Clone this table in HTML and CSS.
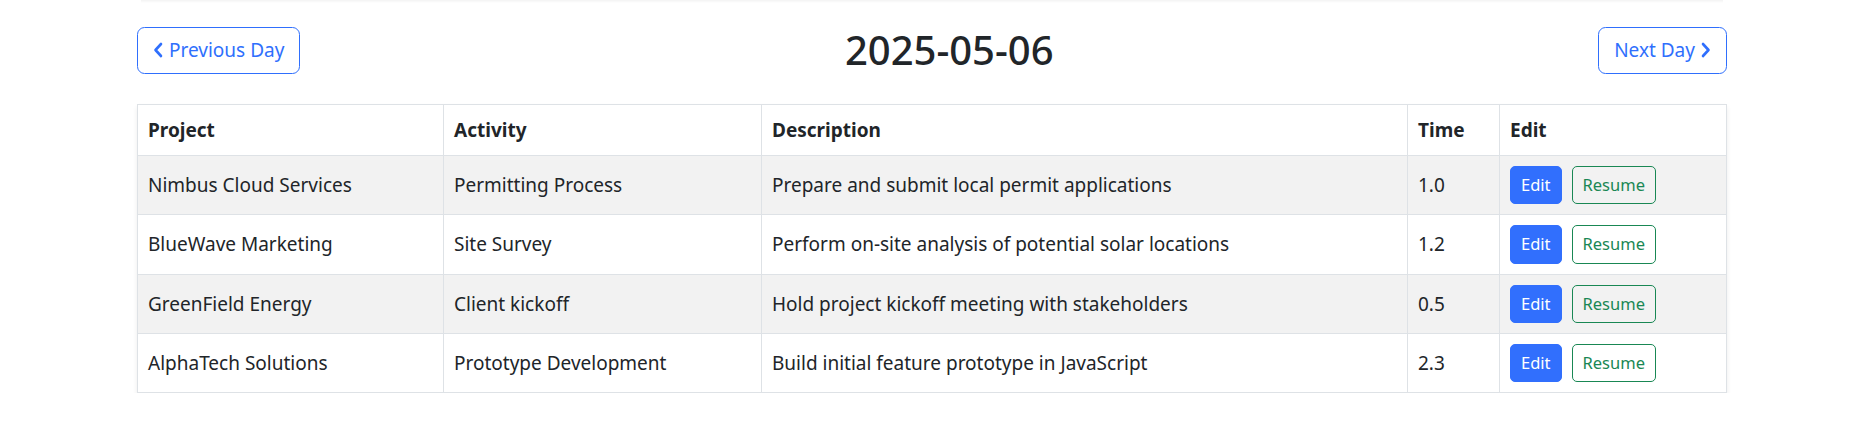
FILE: index.html
```html
<!DOCTYPE html>
<html lang="en">

<head>
    <meta charset="UTF-8">
    <meta name="viewport" content="width=device-width, initial-scale=1.0">
    <title>Daily log</title>
    <link rel="stylesheet" href="styles.css">
</head>

<body>
    <div class="container">
        <div class="card-edge"></div>

        <header class="day-nav">
            <button class="btn btn-outline">
                <svg class="chev" viewBox="0 0 10 16"><path d="M8 2 2.5 8 8 14" /></svg>
                Previous Day
            </button>
            <h2>2025-05-06</h2>
            <button class="btn btn-outline">
                Next Day
                <svg class="chev" viewBox="0 0 10 16"><path d="M2 2 7.5 8 2 14" /></svg>
            </button>
        </header>

        <table class="entries">
            <colgroup>
                <col class="c-project">
                <col class="c-activity">
                <col class="c-desc">
                <col class="c-time">
                <col class="c-edit">
            </colgroup>
            <thead>
                <tr>
                    <th>Project</th>
                    <th>Activity</th>
                    <th>Description</th>
                    <th>Time</th>
                    <th>Edit</th>
                </tr>
            </thead>
            <tbody>
                <tr>
                    <td>Nimbus Cloud Services</td>
                    <td>Permitting Process</td>
                    <td>Prepare and submit local permit applications</td>
                    <td>1.0</td>
                    <td><div class="actions"><button class="btn-sm edit">Edit</button><button class="btn-sm resume">Resume</button></div></td>
                </tr>
                <tr>
                    <td>BlueWave Marketing</td>
                    <td>Site Survey</td>
                    <td>Perform on-site analysis of potential solar locations</td>
                    <td>1.2</td>
                    <td><div class="actions"><button class="btn-sm edit">Edit</button><button class="btn-sm resume">Resume</button></div></td>
                </tr>
                <tr>
                    <td>GreenField Energy</td>
                    <td>Client kickoff</td>
                    <td>Hold project kickoff meeting with stakeholders</td>
                    <td>0.5</td>
                    <td><div class="actions"><button class="btn-sm edit">Edit</button><button class="btn-sm resume">Resume</button></div></td>
                </tr>
                <tr>
                    <td>AlphaTech Solutions</td>
                    <td>Prototype Development</td>
                    <td>Build initial feature prototype in JavaScript</td>
                    <td>2.3</td>
                    <td><div class="actions"><button class="btn-sm edit">Edit</button><button class="btn-sm resume">Resume</button></div></td>
                </tr>
            </tbody>
        </table>
    </div>
</body>

</html>
```

FILE: styles.css
```css
body {
    margin: 0;
    font-family: 'Noto Sans', 'Open Sans', sans-serif;
    font-size: 19px;
    line-height: 30px;
    color: #212529;
    background: #fff;
}

.container {
    margin-left: 137px;
    margin-right: 143px;
}

.card-edge {
    height: 3px;
    margin: 0 4px 23px;
    background: linear-gradient(#f3f3f3, #fff);
}

.day-nav {
    display: flex;
    justify-content: space-between;
    align-items: center;
    margin-bottom: 30px;

    h2 {
        margin: 0;
        font-size: 40px;
        font-weight: 500;
        line-height: 48px;
    }
}

.btn {
    font-family: inherit;
    font-size: 19px;
    line-height: 30px;
    padding: 7.5px 15px;
    border-radius: 7.5px;
    cursor: pointer;
    display: flex;
    align-items: center;
    gap: 6px;
}

.btn-outline {
    background: #fff;
    color: #2f6ffd;
    border: 1.25px solid #2f6ffd;
}

.chev {
    width: 10px;
    height: 16px;

    path {
        fill: none;
        stroke: currentColor;
        stroke-width: 2.6;
        stroke-linecap: round;
        stroke-linejoin: round;
    }
}

.entries {
    width: 100%;
    table-layout: fixed;
    border-collapse: collapse;
    box-shadow: 0 2.5px 5px rgba(0, 0, 0, .08);

    .c-project { width: 306px; }
    .c-activity { width: 318px; }
    .c-desc { width: 646px; }
    .c-time { width: 92px; }

    th,
    td {
        border: 1.25px solid #dee2e6;
        padding: 10px;
        text-align: left;
        vertical-align: middle;
    }

    th {
        font-weight: 700;
    }

    tbody tr:nth-child(odd) td {
        background: #f2f2f2;
    }
}

.actions {
    display: flex;
    gap: 10px;
}

.btn-sm {
    font-family: inherit;
    font-size: 16.5px;
    line-height: 26.25px;
    padding: 5px 10px;
    border-radius: 5px;
    cursor: pointer;

    &.edit {
        background: #316ffd;
        border: 1.25px solid #316ffd;
        color: #fff;
    }

    &.resume {
        background: transparent;
        border: 1.25px solid #198754;
        color: #198754;
    }
}
```
